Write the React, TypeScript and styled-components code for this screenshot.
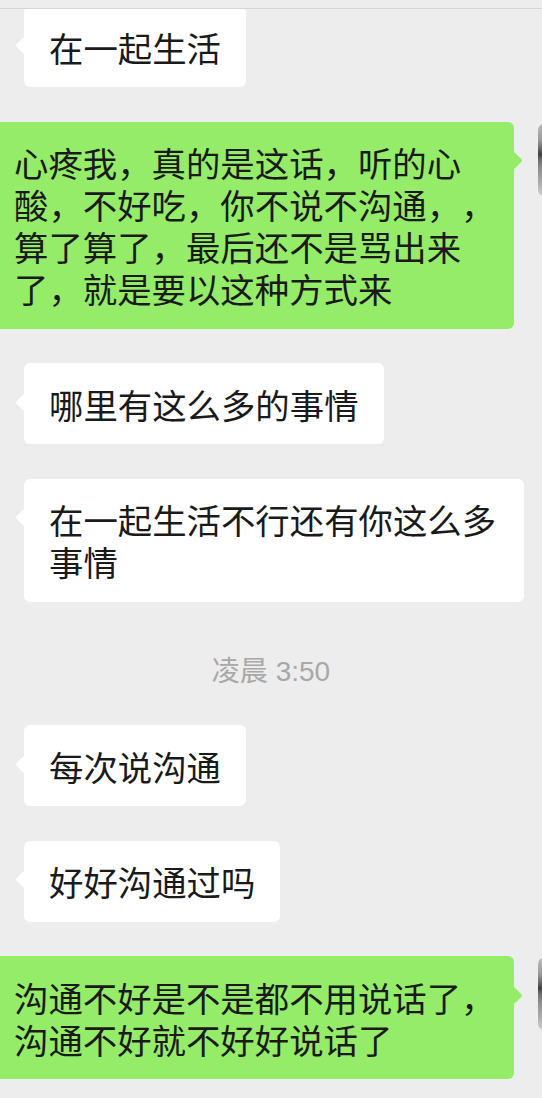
import React from "react";
import styled, { createGlobalStyle, css } from "styled-components";

const GlobalStyle = createGlobalStyle`
  html, body {
    margin: 0;
    padding: 0;
    background: #ededed;
  }
  body {
    font-family: "Noto Sans CJK SC", "Noto Sans", sans-serif;
  }
`;

const Screen = styled.div`
  width: 542px;
  height: 1098px;
  overflow: hidden;
  background: #ededed;
  display: flex;
  flex-direction: column;
`;

const TopBar = styled.div`
  position: relative;
  z-index: 1;
  flex: none;
  height: 8px;
  background: #ededed;
  border-bottom: 1px solid #d6d6d6;
`;

const MessageList = styled.div`
  display: flex;
  flex-direction: column;
  gap: 34.5px;
  margin-top: -3px;
`;

type Side = { $me?: boolean };

const Row = styled.div<Side>`
  display: flex;
  align-items: flex-start;
  ${(p) =>
    p.$me
      ? css`
          justify-content: flex-end;
          gap: 24px;
          margin: 0 -68px 0 -60px;
        `
      : css`
          justify-content: flex-start;
          padding-left: 24px;
        `}
`;

const Bubble = styled.div<Side>`
  position: relative;
  box-sizing: border-box;
  border-radius: 6px;
  font-family: "Noto Sans CJK SC", sans-serif;
  font-size: 34.4px;
  line-height: 42px;
  color: #1a1a1a;
  padding: 19.5px 25px;
  word-break: normal;
  text-spacing-trim: space-all;
  font-kerning: none;
  ${(p) =>
    p.$me
      ? css`
          background: #95ec69;
          max-width: 525px;
          padding-right: 16px;
        `
      : css`
          background: #ffffff;
          max-width: 500px;
        `}

  &::before {
    content: "";
    position: absolute;
    top: 32.5px;
    width: 13px;
    height: 13px;
    border-radius: 2px;
    background: inherit;
    transform: rotate(45deg);
    ${(p) =>
      p.$me
        ? css`
            right: -6px;
          `
        : css`
            left: -6px;
          `}
  }
`;

const Avatar = styled.div`
  flex: none;
  width: 72px;
  height: 72px;
  margin-top: 2px;
  border-radius: 6px;
  background:
    linear-gradient(
      180deg,
      #b9b9b9 0%,
      #9c9c9c 22%,
      #6a6a6a 34%,
      #3e3e3e 42%,
      #6f6f6f 50%,
      #8e8e8e 62%,
      #a9a9a9 80%,
      #cfcfcf 100%
    );
`;

const TimeStamp = styled.div`
  box-sizing: border-box;
  height: 54.5px;
  padding-top: 22px;
  text-align: center;
  font-family: "Liberation Sans", "Noto Sans CJK SC", sans-serif;
  font-size: 28px;
  line-height: 28px;
  color: #a8a8a8;
`;

type Msg =
  | { kind: "text"; me?: boolean; text: string }
  | { kind: "time"; text: string };

const messages: Msg[] = [
  { kind: "text", text: "在一起生活" },
  {
    kind: "text",
    me: true,
    text: "心疼我，真的是这话，听的心酸，不好吃，你不说不沟通，，算了算了，最后还不是骂出来了，就是要以这种方式来",
  },
  { kind: "text", text: "哪里有这么多的事情" },
  { kind: "text", text: "在一起生活不行还有你这么多事情" },
  { kind: "time", text: "凌晨 3:50" },
  { kind: "text", text: "每次说沟通" },
  { kind: "text", text: "好好沟通过吗" },
  {
    kind: "text",
    me: true,
    text: "沟通不好是不是都不用说话了，沟通不好就不好好说话了",
  },
];

export default function App() {
  return (
    <>
      <GlobalStyle />
      <Screen>
        <TopBar />
        <MessageList>
          {messages.map((m, i) =>
            m.kind === "time" ? (
              <TimeStamp key={i}>{m.text}</TimeStamp>
            ) : (
              <Row key={i} $me={m.me}>
                <Bubble $me={m.me}>{m.text}</Bubble>
                {m.me && <Avatar />}
              </Row>
            )
          )}
        </MessageList>
      </Screen>
    </>
  );
}
